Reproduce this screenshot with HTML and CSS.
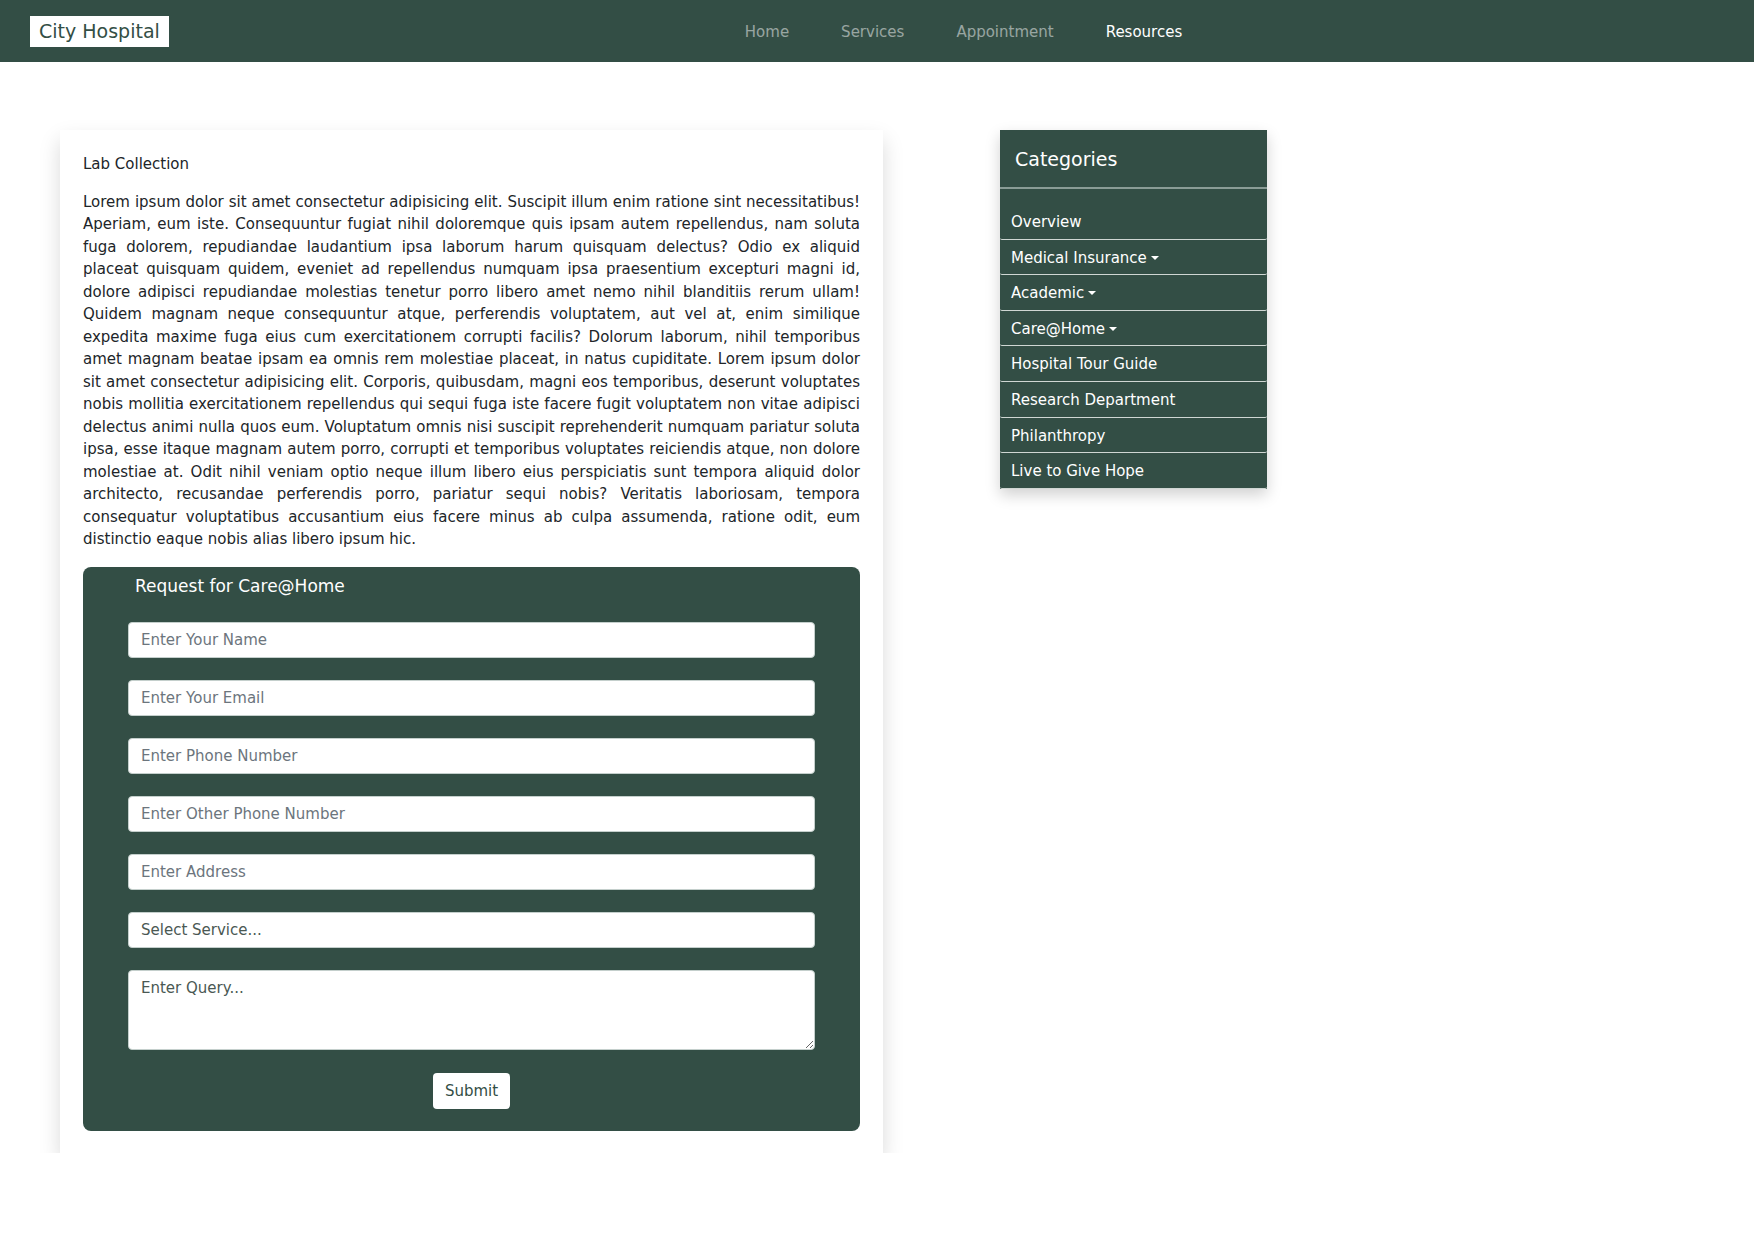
FILE: index.html
```html
<!DOCTYPE html>
<html lang="en">
<head>
    <meta charset="UTF-8">
    <meta name="viewport" content="width=device-width, initial-scale=1.0">
    <title>City Hospital - Care@Home</title>
    <link rel="stylesheet" href="styles.css">
</head>
<body>
    <nav class="navbar">
        <a class="brand" href="#">City Hospital</a>
        <ul class="nav-links">
            <li><a href="#">Home</a></li>
            <li><a href="#">Services</a></li>
            <li><a href="#">Appointment</a></li>
            <li><a href="#" class="active">Resources</a></li>
        </ul>
    </nav>

    <div class="page">
        <div class="content-card">
            <p class="title">Lab Collection</p>
            <p class="lead-text">Lorem ipsum dolor sit amet consectetur adipisicing elit. Suscipit illum enim ratione sint necessitatibus! Aperiam, eum iste. Consequuntur fugiat nihil doloremque quis ipsam autem repellendus, nam soluta fuga dolorem, repudiandae laudantium ipsa laborum harum quisquam delectus? Odio ex aliquid placeat quisquam quidem, eveniet ad repellendus numquam ipsa praesentium excepturi magni id, dolore adipisci repudiandae molestias tenetur porro libero amet nemo nihil blanditiis rerum ullam! Quidem magnam neque consequuntur atque, perferendis voluptatem, aut vel at, enim similique expedita maxime fuga eius cum exercitationem corrupti facilis? Dolorum laborum, nihil temporibus amet magnam beatae ipsam ea omnis rem molestiae placeat, in natus cupiditate. Lorem ipsum dolor sit amet consectetur adipisicing elit. Corporis, quibusdam, magni eos temporibus, deserunt voluptates nobis mollitia exercitationem repellendus qui sequi fuga iste facere fugit voluptatem non vitae adipisci delectus animi nulla quos eum. Voluptatum omnis nisi suscipit reprehenderit numquam pariatur soluta ipsa, esse itaque magnam autem porro, corrupti et temporibus voluptates reiciendis atque, non dolore molestiae at. Odit nihil veniam optio neque illum libero eius perspiciatis sunt tempora aliquid dolor architecto, recusandae perferendis porro, pariatur sequi nobis? Veritatis laboriosam, tempora consequatur voluptatibus accusantium eius facere minus ab culpa assumenda, ratione odit, eum distinctio eaque nobis alias libero ipsum hic.</p>

            <form class="request-form">
                <h5 class="form-title">Request for Care@Home</h5>
                <input type="text" class="field" placeholder="Enter Your Name">
                <input type="email" class="field" placeholder="Enter Your Email">
                <input type="text" class="field" placeholder="Enter Phone Number">
                <input type="text" class="field" placeholder="Enter Other Phone Number">
                <input type="text" class="field" placeholder="Enter Address">
                <div class="field select-field">Select Service...</div>
                <textarea class="field query" placeholder="Enter Query..."></textarea>
                <div class="submit-row">
                    <button type="button" class="submit">Submit</button>
                </div>
            </form>
        </div>

        <aside class="categories">
            <div class="cat-header">Categories</div>
            <ul class="cat-list">
                <li><a href="#">Overview</a></li>
                <li><a href="#" class="toggle">Medical Insurance</a></li>
                <li><a href="#" class="toggle">Academic</a></li>
                <li><a href="#" class="toggle">Care@Home</a></li>
                <li><a href="#">Hospital Tour Guide</a></li>
                <li><a href="#">Research Department</a></li>
                <li><a href="#">Philanthropy</a></li>
                <li><a href="#">Live to Give Hope</a></li>
            </ul>
        </aside>
    </div>
</body>
</html>
```

FILE: styles.css
```css
* {
    margin: 0;
    padding: 0;
    box-sizing: border-box;
}
body {
    font-family: "DejaVu Sans", Verdana, sans-serif;
    font-size: 15px;
    line-height: 1.5;
    color: #212529;
    background: #fff;
}
a {
    text-decoration: none;
}

/* top bar */
.navbar {
    display: flex;
    align-items: center;
    height: 62px;
    padding: 0 30px;
    background: #334e45;
}
.brand {
    display: block;
    background: #fff;
    color: #334e45;
    font-size: 19px;
    line-height: 23px;
    padding: 4px 9px;
}
.nav-links {
    display: flex;
    list-style: none;
    margin-left: 550px;
    padding-top: 2px;
}
.nav-links a {
    display: block;
    padding: 8px 26px;
    font-size: 15px;
    color: rgba(255, 255, 255, 0.5);
}
.nav-links a.active {
    color: #fff;
}

/* main area */
.page {
    display: flex;
    align-items: flex-start;
    padding: 68px 0 0 60px;
}
.content-card {
    width: 823px;
    padding: 23px 23px 22px;
    background: #fff;
    box-shadow: 0 10px 20px rgba(0, 0, 0, 0.15);
}
.title {
    margin-bottom: 15px;
}
.lead-text {
    text-align: justify;
    margin-bottom: 16px;
}

/* care@home form */
.request-form {
    background: #334e45;
    border-radius: 8px;
    padding: 6px 45px 22px;
}
.form-title {
    color: #fff;
    font-size: 17px;
    font-weight: normal;
    line-height: 26px;
    padding-left: 7px;
    margin-bottom: 23px;
}
.field {
    display: block;
    width: 100%;
    height: 36px;
    margin-bottom: 22px;
    padding: 6px 12px;
    font-family: inherit;
    font-size: 15px;
    line-height: 22px;
    color: #495752;
    background: #fff;
    border: 1px solid #c4cfcc;
    border-radius: 4px;
    outline: none;
}
.field::placeholder {
    color: #6c757d;
}
.select-field {
    color: #4a5853;
}
.query {
    height: 80px;
    resize: vertical;
}
.query::placeholder {
    color: #4a5853;
}
.submit-row {
    display: flex;
    justify-content: center;
    padding-top: 1px;
}
.submit {
    font-family: inherit;
    font-size: 15px;
    color: #334e45;
    background: #fff;
    border: none;
    border-radius: 4px;
    padding: 7px 12px;
    line-height: 22px;
}

/* sidebar */
.categories {
    width: 267px;
    margin-left: 117px;
    background: #334e45;
    box-shadow: 0 6px 14px rgba(0, 0, 0, 0.18);
}
.cat-header {
    height: 59px;
    padding: 16px 15px 0;
    font-size: 19px;
    line-height: 26px;
    color: #fff;
    border-bottom: 2px solid #8a9c96;
}
.cat-list {
    list-style: none;
    margin-top: 15px;
}
.cat-list li {
    border-bottom: 1px solid #cfd6d3;
    border-radius: 2px;
}
.cat-list a {
    display: block;
    height: 34.6px;
    padding: 7px 11px 0;
    font-size: 15px;
    line-height: 22px;
    color: #fff;
}
.toggle::after {
    content: "";
    display: inline-block;
    margin-left: 4px;
    vertical-align: 3px;
    border-top: 4px solid #fff;
    border-left: 4px solid transparent;
    border-right: 4px solid transparent;
}
```
